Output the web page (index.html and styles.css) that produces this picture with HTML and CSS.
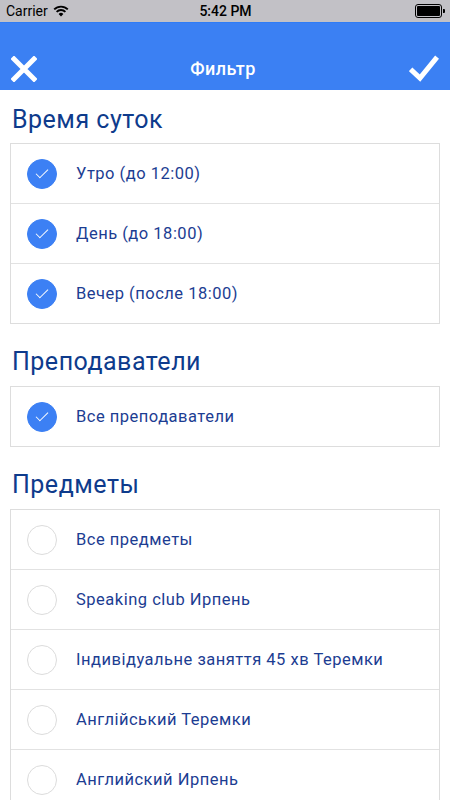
FILE: index.html
```html
<!DOCTYPE html>
<html lang="ru">

<head>
    <meta charset="UTF-8">
    <meta name="viewport" content="width=device-width, initial-scale=1.0">
    <title>Фильтр</title>
    <link rel="stylesheet" href="styles.css">
</head>

<body>
    <div class="status-bar">
        <div class="status-left">
            <span>Carrier</span>
            <svg class="wifi" width="16" height="12" viewBox="0 0 16 12">
                <path d="M8 11.5 L5.6 8.9 A3.4 3.4 0 0 1 10.4 8.9 Z" fill="#000"/>
                <path d="M3.6 6.9 A6.2 6.2 0 0 1 12.4 6.9" stroke="#000" stroke-width="1.9" fill="none"/>
                <path d="M1.2 4.4 A9.6 9.6 0 0 1 14.8 4.4" stroke="#000" stroke-width="1.9" fill="none"/>
            </svg>
        </div>
        <div class="status-time">5:42 PM</div>
        <div class="status-right">
            <div class="battery"><div class="battery-level"></div></div>
            <div class="battery-tip"></div>
        </div>
    </div>

    <div class="nav-bar">
        <button class="nav-btn">
            <svg width="26" height="26" viewBox="0 0 26 26">
                <path d="M3 3 L23 23 M23 3 L3 23" stroke="#fff" stroke-width="5" stroke-linecap="square"/>
            </svg>
        </button>
        <div class="nav-title">Фильтр</div>
        <button class="nav-btn">
            <svg width="30" height="28" viewBox="0 0 30 28">
                <path d="M3.5 16 L11 23 L26.5 4" stroke="#fff" stroke-width="5" fill="none" stroke-linecap="square"/>
            </svg>
        </button>
    </div>

    <div class="content">
        <div class="section">
            <h2 class="section-title">Время суток</h2>
            <div class="option-list">
                <div class="option checked"><span class="radio"></span><span class="label">Утро (до 12:00)</span></div>
                <div class="option checked"><span class="radio"></span><span class="label">День (до 18:00)</span></div>
                <div class="option checked"><span class="radio"></span><span class="label">Вечер (после 18:00)</span></div>
            </div>
        </div>

        <div class="section">
            <h2 class="section-title">Преподаватели</h2>
            <div class="option-list">
                <div class="option checked"><span class="radio"></span><span class="label">Все преподаватели</span></div>
            </div>
        </div>

        <div class="section">
            <h2 class="section-title">Предметы</h2>
            <div class="option-list">
                <div class="option"><span class="radio"></span><span class="label">Все предметы</span></div>
                <div class="option"><span class="radio"></span><span class="label">Speaking club Ирпень</span></div>
                <div class="option"><span class="radio"></span><span class="label">Індивідуальне заняття 45 хв Теремки</span></div>
                <div class="option"><span class="radio"></span><span class="label">Англійський Теремки</span></div>
                <div class="option"><span class="radio"></span><span class="label">Английский Ирпень</span></div>
            </div>
        </div>
    </div>
</body>

</html>
```

FILE: styles.css
```css
body {
    margin: 0;
    font-family: Roboto, 'Noto Sans', sans-serif;
    background: #ffffff;
    height: 800px;
    overflow: hidden;
}

.status-bar {
    height: 22px;
    background: #c2c1c6;
    display: flex;
    align-items: center;
    justify-content: space-between;
    padding: 0 5px 0 6px;
    font-size: 14px;
    color: #000;
}

.status-left {
    display: flex;
    align-items: center;
    gap: 5px;
    width: 120px;
}

.status-time {
    font-weight: 500;
}

.status-right {
    width: 120px;
    display: flex;
    justify-content: flex-end;
    align-items: center;
}

.battery {
    width: 23px;
    height: 10px;
    border: 1px solid #000;
    border-radius: 3px;
    padding: 1px;
}

.battery-level {
    width: 100%;
    height: 100%;
    background: #000;
    border-radius: 1px;
}

.battery-tip {
    width: 2px;
    height: 4px;
    background: #000;
    margin-left: 1px;
    border-radius: 0 1px 1px 0;
}

.nav-bar {
    padding-top: 24px;
    background: #3b80f3;
    border-top: 1px solid #2f7cf6;
    box-sizing: border-box;
    height: 68px;
    display: flex;
    align-items: center;
    justify-content: space-between;
    padding-left: 11px;
    padding-right: 11px;
}

.nav-btn {
    background: none;
    border: none;
    padding: 0;
    display: flex;
    cursor: pointer;
}

.nav-title {
    color: #ffffff;
    font-size: 18px;
    font-weight: 500;
    letter-spacing: 0.4px;
}

.section-title {
    margin: 16px 12px 4px;
    padding-top: 2px;
    font-size: 25px;
    line-height: 40px;
    font-weight: 400;
    letter-spacing: 0.5px;
    color: #0e3b8c;
}

.section:first-child .section-title {
    margin-top: 8px;
    margin-bottom: 3px;
}

.option-list {
    margin: 0 10px;
    border: 1px solid #dddddd;
}

.option {
    height: 59px;
    display: flex;
    align-items: center;
    padding-left: 16px;
    border-top: 1px solid #e2e2e2;
}

.option:first-child {
    border-top: none;
}

.radio {
    width: 30px;
    height: 30px;
    box-sizing: border-box;
    border-radius: 50%;
    border: 1px solid #dcdcdc;
    margin-right: 19px;
    flex-shrink: 0;
    display: flex;
    align-items: center;
    justify-content: center;
}

.option.checked .radio {
    background: #3c80f4;
    border-color: #3c80f4;
}

.option.checked .radio::after {
    content: '';
    width: 11px;
    height: 5px;
    border-left: 1.5px solid #fff;
    border-bottom: 1.5px solid #fff;
    transform: translateY(-2px) rotate(-45deg);
}

.label {
    font-size: 16.5px;
    letter-spacing: 0.5px;
    color: #1c3d92;
}
```
